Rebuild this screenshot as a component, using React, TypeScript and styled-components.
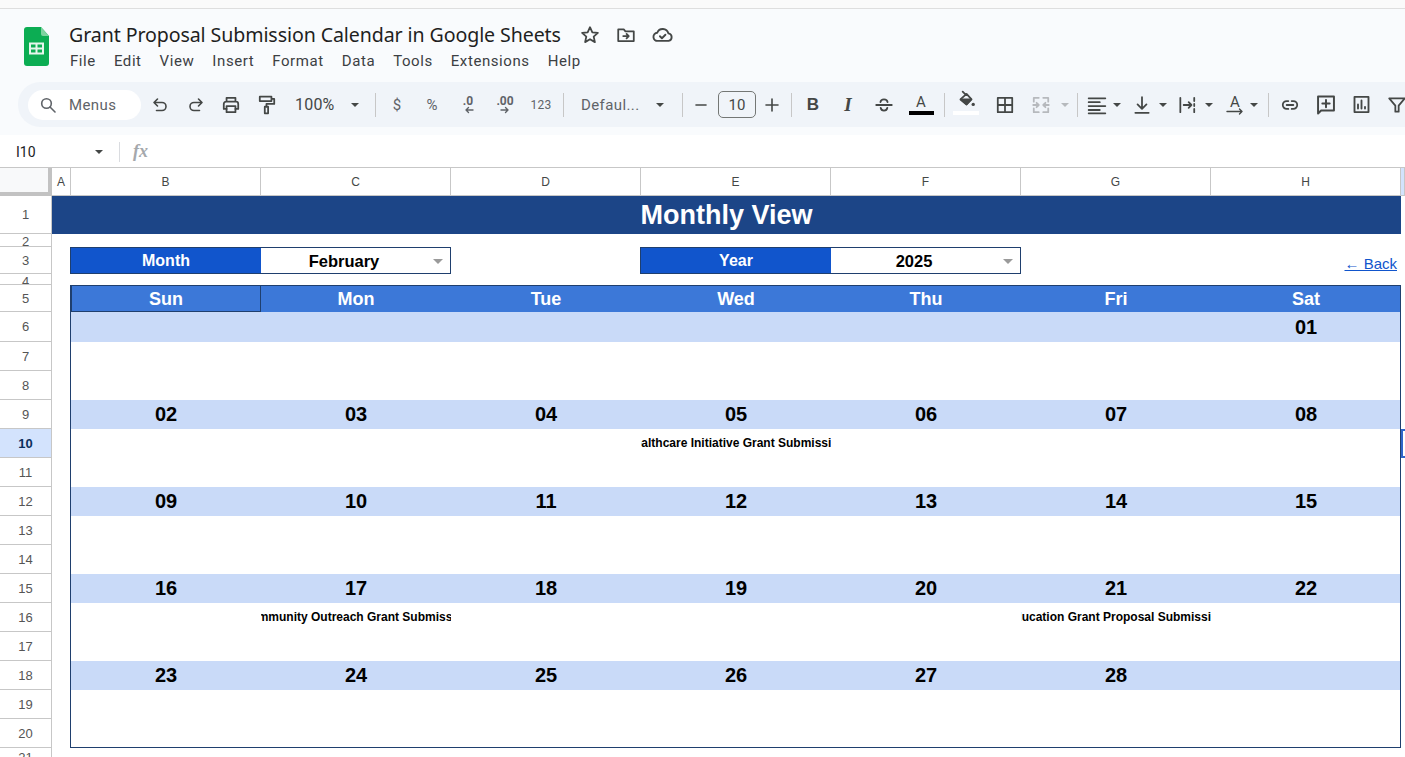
import React from "react";
import styled, { createGlobalStyle } from "styled-components";

const Global = createGlobalStyle`
  html, body { margin: 0; padding: 0; height: 100%; overflow: hidden; background: #fff; }
  #root { height: 100%; }
  *, *::before, *::after { box-sizing: border-box; }
`;

const Page = styled.div`
  width: 1405px;
  height: 757px;
  overflow: hidden;
  display: flex;
  flex-direction: column;
  font-family: Roboto, "Liberation Sans", sans-serif;
  color: #444746;
`;

const TopStrip = styled.div`
  height: 9px;
  flex: none;
  background: #fafafa;
  border-bottom: 1px solid #dedede;
`;

const Header = styled.header`
  height: 126px;
  flex: none;
  background: #f9fbfd;
  overflow: hidden;
`;

const TitleArea = styled.div`
  height: 73px;
  display: flex;
  align-items: flex-start;
  padding: 18px 0 0 24px;
`;

const LogoSvg = styled.svg`
  width: 25px;
  height: 39px;
  flex: none;
`;

const TitleColumn = styled.div`
  margin-left: 20px;
  display: flex;
  flex-direction: column;
  margin-top: -1px;
`;

const TitleRow = styled.div`
  display: flex;
  align-items: center;
  height: 17px;
`;

const DocTitle = styled.h1`
  margin: 0;
  font-family: "Noto Sans", Roboto, sans-serif;
  font-weight: 400;
  font-size: 19.6px;
  letter-spacing: -0.1px;
  line-height: 17px;
  color: #1f1f1f;
  white-space: nowrap;
  width: 511px;
`;

const TitleIcons = styled.div`
  display: flex;
  align-items: center;
  gap: 16px;
  color: #444746;
`;

const MenuBar = styled.nav`
  display: flex;
  gap: 18px;
  margin-top: 9px;
  margin-left: 1px;
  font-size: 15px;
  line-height: 18px;
  letter-spacing: 0.58px;
  color: #3c4043;
`;

const MenuItem = styled.span`
  white-space: nowrap;
`;

const Toolbar = styled.div`
  margin-left: 18px;
  height: 45px;
  width: 1420px;
  display: flex;
  align-items: center;
  padding-left: 10px;
  background: #f0f4f9;
  border-radius: 22px 0 0 22px;
`;

const SearchPill = styled.div`
  width: 113px;
  height: 30px;
  flex: none;
  margin-right: 1px;
  border-radius: 15px;
  background: #fff;
  display: flex;
  align-items: center;
  gap: 12px;
  padding-left: 11px;
  font-size: 15px;
  letter-spacing: 0.4px;
  color: #5f6368;
`;

const Cell = styled.div<{ $w: number; $ml?: number; $faded?: boolean }>`
  width: ${(p) => p.$w}px;
  margin-left: ${(p) => p.$ml ?? 0}px;
  height: 30px;
  flex: none;
  display: flex;
  align-items: center;
  justify-content: center;
  color: ${(p) => (p.$faded ? "#b6b9bd" : "#444746")};
`;

const LabelCell = styled(Cell)<{ $size?: number }>`
  font-size: ${(p) => p.$size ?? 15}px;
  letter-spacing: 0.2px;
  white-space: nowrap;
  color: #5f6368;
`;

const Sep = styled.i<{ $w: number }>`
  width: ${(p) => p.$w}px;
  height: 24px;
  flex: none;
  display: flex;
  justify-content: center;
  &::after {
    content: "";
    width: 1px;
    height: 100%;
    background: #c7c7c7;
  }
`;

const Caret = styled.b<{ $muted?: boolean }>`
  width: 0;
  height: 0;
  border-left: 4.5px solid transparent;
  border-right: 4.5px solid transparent;
  border-top: 4.5px solid ${(p) => (p.$muted ? "#b6b9bd" : "#444746")};
`;

const ZoomText = styled(LabelCell)`
  justify-content: flex-start;
  padding-left: 11px;
  font-size: 16px;
  color: #444746;
`;

const FontName = styled(LabelCell)`
  justify-content: flex-start;
  padding-left: 7px;
  font-size: 15px;
  letter-spacing: 0.4px;
`;

const SizeBox = styled.div`
  width: 38px;
  height: 27px;
  margin-left: 10px;
  flex: none;
  border: 1px solid #747775;
  border-radius: 5px;
  display: flex;
  align-items: center;
  justify-content: center;
  font-size: 15px;
  color: #444746;
`;

const Decimal = styled.div`
  display: flex;
  flex-direction: column;
  align-items: center;
  font-size: 12px;
  font-weight: 700;
  line-height: 12px;
  color: #5f6368;
  margin-top: 4px;
  svg {
    margin-top: -1px;
  }
`;

const Glyph = styled.span<{ $italic?: boolean }>`
  font-family: ${(p) => (p.$italic ? '"Liberation Serif", serif' : '"Liberation Sans", sans-serif')};
  font-weight: 700;
  font-style: ${(p) => (p.$italic ? "italic" : "normal")};
  font-size: ${(p) => (p.$italic ? 19 : 17)}px;
  color: #444746;
`;

const TextColor = styled.div`
  width: 25px;
  display: flex;
  flex-direction: column;
  align-items: center;
  font-size: 15px;
  line-height: 16px;
  color: #444746;
  &::after {
    content: "";
    width: 25px;
    height: 4px;
    margin-top: 1px;
    background: #000;
  }
`;

const FillStack = styled.div`
  display: flex;
  flex-direction: column;
  align-items: center;
  margin-top: -4px;
  &::after {
    content: "";
    width: 26px;
    height: 4px;
    margin-top: 1px;
    background: #fff;
  }
`;

const RotateStack = styled.div`
  display: flex;
  flex-direction: column;
  align-items: center;
  font-size: 15px;
  line-height: 14px;
  color: #444746;
  svg {
    display: block;
    margin-top: -1px;
    margin-bottom: -12px;
  }
`;

const FormulaBar = styled.div`
  height: 33px;
  flex: none;
  background: #fff;
  border-bottom: 1px solid #c7c7c7;
  display: flex;
  align-items: center;
  padding: 1px 0 0 16px;
`;

const NameBox = styled.div`
  width: 79px;
  font-size: 14px;
  color: #202124;
`;

const BarDivider = styled.i`
  width: 1px;
  height: 20px;
  margin-left: 16px;
  background: #dadce0;
`;

const Fx = styled.span`
  margin-left: 13px;
  font-family: "Liberation Serif", serif;
  font-style: italic;
  font-weight: 700;
  font-size: 18px;
  color: #a5a8ac;
`;

const Sheet = styled.div`
  flex: 1;
  min-height: 0;
  display: grid;
  overflow: hidden;
  font-family: "Liberation Sans", Arial, sans-serif;
  grid-template-columns: 52px 19px repeat(7, 190px) 1fr;
  grid-template-rows: 28px 38px 13px 27px 11px 27px 30px repeat(14, 29px) 20px;
`;

const Corner = styled.div`
  grid-row: 1;
  grid-column: 1;
  background: #f8f9fa;
  border-right: 4px solid #c2c2c2;
  border-bottom: 4px solid #c2c2c2;
`;

const ColHead = styled.div<{ $col: number; $active?: boolean }>`
  grid-row: 1;
  grid-column: ${(p) => p.$col};
  background: ${(p) => (p.$active ? "#d3e3fd" : "#fff")};
  border-right: 1px solid #c7c7c7;
  border-bottom: 1px solid #c7c7c7;
  display: flex;
  align-items: center;
  justify-content: center;
  font-size: 12px;
  color: #444746;
`;

const RowHead = styled.div<{ $row: number; $active?: boolean; $fit?: boolean }>`
  grid-row: ${(p) => p.$row + 1};
  grid-column: 1;
  background: ${(p) => (p.$active ? "#d3e3fd" : "#fff")};
  border-right: 1px solid #c7c7c7;
  border-bottom: 1px solid #c7c7c7;
  display: flex;
  align-items: ${(p) => (p.$fit ? "flex-start" : "center")};
  justify-content: center;
  overflow: hidden;
  font-size: 13px;
  font-weight: ${(p) => (p.$active ? 700 : 400)};
  color: ${(p) => (p.$active ? "#0b2f5c" : "#555")};
`;

const Banner = styled.div`
  grid-row: 2;
  grid-column: 2 / 10;
  background: #1c4587;
  color: #fff;
  display: flex;
  align-items: center;
  justify-content: center;
  font-size: 27px;
  font-weight: 700;
`;

const SelectorLabel = styled.div<{ $col: number }>`
  grid-row: 4;
  grid-column: ${(p) => p.$col};
  margin-left: -1px;
  background: #1155cc;
  border: 1px solid #1f3f6e;
  border-right: none;
  color: #fff;
  display: flex;
  align-items: center;
  justify-content: center;
  padding-top: 1px;
  font-size: 16px;
  font-weight: 700;
`;

const SelectorValue = styled.div<{ $col: number }>`
  grid-row: 4;
  grid-column: ${(p) => p.$col};
  background: #fff;
  border: 1px solid #1f3f6e;
  border-left: none;
  color: #000;
  display: flex;
  align-items: center;
  justify-content: center;
  padding: 1px 23px 0 0;
  font-size: 16.5px;
  font-weight: 700;
  position: relative;
`;

const SelectCaret = styled.b`
  position: absolute;
  right: 7px;
  top: 11px;
  width: 0;
  height: 0;
  border-left: 5px solid transparent;
  border-right: 5px solid transparent;
  border-top: 5px solid #9a9a9a;
`;

const BackLink = styled.a`
  grid-row: 4;
  grid-column: 9;
  justify-self: end;
  align-self: end;
  margin-right: 4px;
  margin-bottom: 2px;
  font-size: 15px;
  line-height: 17px;
  color: #1155cc;
  text-decoration: underline;
`;

const Calendar = styled.section`
  grid-row: 6 / 22;
  grid-column: 3 / 10;
  display: grid;
  grid-template-columns: repeat(7, 190px);
  grid-template-rows: 27px 30px repeat(14, 29px);
  position: relative;
  z-index: 1;
  &::after {
    content: "";
    position: absolute;
    top: 0;
    left: -1px;
    right: 0;
    height: 463px;
    border: 1px solid #1f3f6e;
    pointer-events: none;
  }
`;

const DayName = styled.div<{ $active?: boolean }>`
  background: #3c78d8;
  color: #fff;
  display: flex;
  align-items: center;
  justify-content: center;
  padding-top: 1px;
  font-size: 18px;
  font-weight: 700;
  box-shadow: ${(p) => (p.$active ? "inset 0 0 0 1px #1f3f6e" : "none")};
`;

const DateCell = styled.div`
  background: #c9daf8;
  color: #000;
  display: flex;
  align-items: center;
  justify-content: center;
  font-size: 20px;
  font-weight: 700;
`;

const EventCell = styled.div`
  grid-row-end: span 2;
  background: #fff;
  height: 58px;
  overflow: hidden;
  display: flex;
  justify-content: center;
  align-items: flex-start;
  padding-top: 7px;
  font-size: 12px;
  font-weight: 700;
  line-height: 15px;
  white-space: nowrap;
  color: #000;
`;

const EventText = styled.span`
  flex: none;
`;

const ActiveCell = styled.div`
  grid-row: 11;
  grid-column: 10;
  border: 2px solid #2f66c9;
  border-right: none;
  background: #fff;
  z-index: 2;
`;

const Svg = ({ size = 18, box = 18, children, sw = 1.6 }: { size?: number; box?: number; sw?: number; children: React.ReactNode }) => (
  <svg width={size} height={size} viewBox={`0 0 ${box} ${box}`} fill="none" stroke="currentColor" strokeWidth={sw} strokeLinecap="round" strokeLinejoin="round">
    {children}
  </svg>
);

const SheetsLogo = () => (
  <LogoSvg viewBox="0 0 25 39">
    <path d="M3 0h14l8 9v27a3 3 0 0 1-3 3H3a3 3 0 0 1-3-3V3a3 3 0 0 1 3-3z" fill="#0cad53" />
    <path d="M17 0l8 9h-6a2 2 0 0 1-2-2z" fill="#7ed3a0" />
    <path d="M6 16.500h13v10H6zM12.500 16.500v10M6 21.500h13" fill="none" stroke="#e6f6ec" strokeWidth="2" />
  </LogoSvg>
);

const weeks: (string | null)[][] = [
  [null, null, null, null, null, null, "01"],
  ["02", "03", "04", "05", "06", "07", "08"],
  ["09", "10", "11", "12", "13", "14", "15"],
  ["16", "17", "18", "19", "20", "21", "22"],
  ["23", "24", "25", "26", "27", "28", null],
];

const events: Record<string, string> = {
  "05": "Healthcare Initiative Grant Submission",
  "17": "Community Outreach Grant Submission",
  "21": "Education Grant Proposal Submission",
};

const menus = ["File", "Edit", "View", "Insert", "Format", "Data", "Tools", "Extensions", "Help"];
const dayNames = ["Sun", "Mon", "Tue", "Wed", "Thu", "Fri", "Sat"];
const columns = ["A", "B", "C", "D", "E", "F", "G", "H"];

export default function App() {
  return (
    <Page>
      <Global />
      <TopStrip />
      <Header>
        <TitleArea>
          <SheetsLogo />
          <TitleColumn>
            <TitleRow>
              <DocTitle>Grant Proposal Submission Calendar in Google Sheets</DocTitle>
              <TitleIcons>
                <Svg size={20}>
                  <path d="M9 2l2.100 4.600 5 .5-3.800 3.300 1.100 5L9 12.800l-4.400 2.600 1.100-5L1.900 7.100l5-.5z" />
                </Svg>
                <Svg size={20}>
                  <path d="M2 4h5l1.500 1.700H16V14.500H2z" />
                  <path d="M6.500 10h5M9.500 8l2 2-2 2" />
                </Svg>
                <Svg size={21}>
                  <path d="M5 14.500a3.500 3.500 0 0 1-.5-7A5 5 0 0 1 14 8a3.300 3.300 0 0 1 .2 6.500z" />
                  <path d="M6.800 10.500l1.700 1.700 3-3" />
                </Svg>
              </TitleIcons>
            </TitleRow>
            <MenuBar>
              {menus.map((m) => (
                <MenuItem key={m}>{m}</MenuItem>
              ))}
            </MenuBar>
          </TitleColumn>
        </TitleArea>
        <Toolbar>
          <SearchPill>
            <Svg size={18}><circle cx="7.500" cy="7.500" r="4.800" /><path d="M11 11l5 5" /></Svg>
            Menus
          </SearchPill>
          <Cell $w={36}><Svg><path d="M6.500 3L3 6.500 6.500 10M3.500 6.500H11a4 4 0 0 1 0 8H5.500" /></Svg></Cell>
          <Cell $w={35}><Svg><path d="M11.500 3L15 6.500 11.500 10M14.500 6.500H7a4 4 0 0 0 0 8h5.500" /></Svg></Cell>
          <Cell $w={36}>
            <Svg size={20}><path d="M5 6V2.500h8V6M5 12.500H2.500V8A2 2 0 0 1 4.500 6h9a2 2 0 0 1 2 2v4.500H13" /><path d="M5 10h8v5.500H5z" /></Svg>
          </Cell>
          <Cell $w={35}>
            <Svg size={20}><path d="M2.500 1.500h10.500v4H2.500zM13 3.500h2.500v4.500H8.500v2.500" /><path d="M7 10.500h3v6H7z" /></Svg>
          </Cell>
          <ZoomText $w={61}>100%</ZoomText>
          <Cell $w={19}><Caret /></Cell>
          <Sep $w={22} />
          <LabelCell $w={22}>$</LabelCell>
          <LabelCell $w={48}>%</LabelCell>
          <Cell $w={24}>
            <Decimal>.0<Svg size={12} box={12} sw={1.4}><path d="M11 4H4M6.500 1.500L4 4l2.500 2.500" /></Svg></Decimal>
          </Cell>
          <Cell $w={50}>
            <Decimal>.00<Svg size={12} box={12} sw={1.4}><path d="M2 4h7M6.500 1.500L9 4 6.500 6.500" /></Svg></Decimal>
          </Cell>
          <LabelCell $w={22} $size={12}>123</LabelCell>
          <Sep $w={22} />
          <FontName $w={76}>Defaul...</FontName>
          <Cell $w={20}><Caret /></Cell>
          <Sep $w={24} />
          <Cell $w={14}><Svg size={14} box={14}><path d="M2 7h10" /></Svg></Cell>
          <SizeBox>10</SizeBox>
          <Cell $w={32}><Svg size={14} box={14}><path d="M1 7h12M7 1v12" /></Svg></Cell>
          <Sep $w={6} />
          <Cell $w={38}><Glyph>B</Glyph></Cell>
          <Cell $w={32}><Glyph $italic>I</Glyph></Cell>
          <Cell $w={40}>
            <Svg size={20}><path d="M2 9h14M5.800 6.500C6 4.800 7.300 4 9 4s3 .8 3.200 2.500M6 11.500C6.300 13.200 7.300 14 9 14s2.700-.8 3-2.500" /></Svg>
          </Cell>
          <Cell $w={34}><TextColor>A</TextColor></Cell>
          <Sep $w={12} />
          <Cell $w={32}>
            <FillStack>
              <Svg size={20}>
                <path d="M6 1.500L8 3.500M4 8.500L9.500 3.500 14 8.500 9.500 13z" fill="#f0f4f9" />
                <path d="M4.500 8.500h9L9.500 13z" fill="#444746" />
                <circle cx="15.500" cy="13" r="1.500" fill="#444746" stroke="none" />
              </Svg>
            </FillStack>
          </Cell>
          <Cell $w={46}><Svg size={20}><path d="M2.500 2.500h13v13h-13zM9 2.500v13M2.500 9h13" /></Svg></Cell>
          <Cell $w={26} $faded>
            <Svg size={20}><path d="M7 2.500H2.500V6M7 15.500H2.500V12M11 2.500h4.500V6M11 15.500h4.500V12M2 9h5M5 7l2 2-2 2M16 9h-5M13 7l-2 2 2 2" /></Svg>
          </Cell>
          <Cell $w={22}><Caret $muted /></Cell>
          <Sep $w={2} />
          <Cell $w={20} $ml={9}><Svg size={20}><path d="M1.500 3h15M1.500 6.500h10M1.500 10h15M1.500 13.500h10M1.500 16.500h15" /></Svg></Cell>
          <Cell $w={20}><Caret /></Cell>
          <Cell $w={24} $ml={3}><Svg size={20}><path d="M9 2v10M5 8.500L9 12.500l4-4M3 16h12" /></Svg></Cell>
          <Cell $w={18}><Caret /></Cell>
          <Cell $w={30}><Svg size={20}><path d="M3 2.500v13M15.500 2.500v3M15.500 8v2M15.500 12.500v3M6 9h7M10.500 6.500L13 9l-2.500 2.500" /></Svg></Cell>
          <Cell $w={14}><Caret /></Cell>
          <Cell $w={22} $ml={8}>
            <RotateStack>A<Svg size={18} box={18} sw={1.4}><path d="M1 3.500h15M13.500 1L16 3.500 13.500 6" /></Svg></RotateStack>
          </Cell>
          <Cell $w={16}><Caret /></Cell>
          <Sep $w={12} />
          <Cell $w={32}>
            <Svg size={20}><path d="M7.500 5.500H6a3.500 3.500 0 0 0 0 7h1.500M10.500 5.500H12a3.500 3.500 0 0 1 0 7h-1.500M6 9h6" /></Svg>
          </Cell>
          <Cell $w={40}>
            <Svg size={22}><path d="M2.500 2h13v11.500H5L2.500 16zM9 4.800v6M6 7.800h6" /></Svg>
          </Cell>
          <Cell $w={30}>
            <Svg size={21}><path d="M3 2.500h12v13H3zM6 12.500V9M9 12.500V5.500M12 12.500v-1.500" /></Svg>
          </Cell>
          <Cell $w={42}><Svg size={20}><path d="M2 3h14l-5.500 6.500V15h-3V9.500z" /></Svg></Cell>
        </Toolbar>
      </Header>
      <FormulaBar>
        <NameBox>I10</NameBox>
        <Caret />
        <BarDivider />
        <Fx>fx</Fx>
      </FormulaBar>
      <Sheet>
        <Corner />
        {columns.map((c, i) => (
          <ColHead key={c} $col={i + 2}>{c}</ColHead>
        ))}
        <ColHead $col={10} $active />
        {Array.from({ length: 21 }, (_, i) => i + 1).map((r) => (
          <RowHead key={r} $row={r} $active={r === 10} $fit={r === 2 || r === 4}>
            {r}
          </RowHead>
        ))}
        <Banner>Monthly View</Banner>
        <SelectorLabel $col={3}>Month</SelectorLabel>
        <SelectorValue $col={4}>February<SelectCaret /></SelectorValue>
        <SelectorLabel $col={6}>Year</SelectorLabel>
        <SelectorValue $col={7}>2025<SelectCaret /></SelectorValue>
        <BackLink href="#">← Back</BackLink>
        <Calendar>
          {dayNames.map((d, i) => (
            <DayName key={d} $active={i === 0}>{d}</DayName>
          ))}
          {weeks.map((week, w) => (
            <React.Fragment key={w}>
              {week.map((d, i) => (
                <DateCell key={i}>{d}</DateCell>
              ))}
              {week.map((d, i) => (
                <EventCell key={i}>
                  {d && events[d] ? <EventText>{events[d]}</EventText> : null}
                </EventCell>
              ))}
            </React.Fragment>
          ))}
        </Calendar>
        <ActiveCell />
      </Sheet>
    </Page>
  );
}
